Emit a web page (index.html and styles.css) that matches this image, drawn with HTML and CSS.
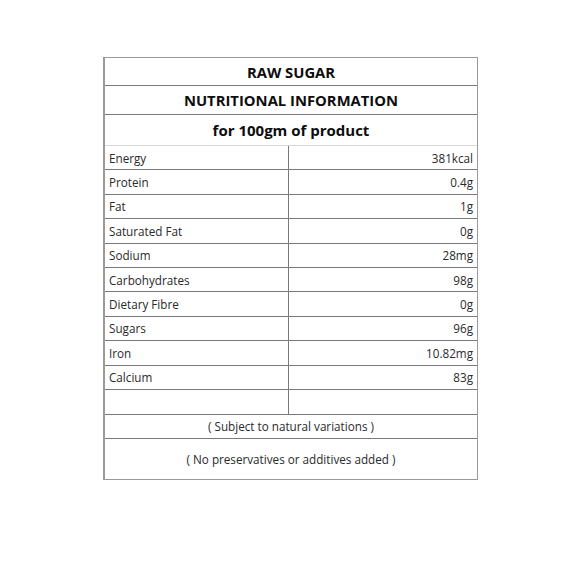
FILE: index.html
```html
<!DOCTYPE html>
<html>
<head>
<meta charset="utf-8">
<link rel="stylesheet" href="styles.css">
</head>
<body>
<div class="panel">
  <div class="head h1">RAW SUGAR</div>
  <div class="head h2">NUTRITIONAL INFORMATION</div>
  <div class="head h3">for 100gm of product</div>
  <div class="row"><div class="k">Energy</div><div class="v">381kcal</div></div>
  <div class="row"><div class="k">Protein</div><div class="v">0.4g</div></div>
  <div class="row"><div class="k">Fat</div><div class="v">1g</div></div>
  <div class="row"><div class="k">Saturated Fat</div><div class="v">0g</div></div>
  <div class="row"><div class="k">Sodium</div><div class="v">28mg</div></div>
  <div class="row"><div class="k">Carbohydrates</div><div class="v">98g</div></div>
  <div class="row"><div class="k">Dietary Fibre</div><div class="v">0g</div></div>
  <div class="row"><div class="k">Sugars</div><div class="v">96g</div></div>
  <div class="row"><div class="k">Iron</div><div class="v">10.82mg</div></div>
  <div class="row"><div class="k">Calcium</div><div class="v">83g</div></div>
  <div class="row empty"><div class="k"></div><div class="v"></div></div>
  <div class="note n1">( Subject to natural variations )</div>
  <div class="note n2">( No preservatives or additives added )</div>
</div>
</body>
</html>
```
FILE: styles.css
```css
html, body {
  margin: 0;
  padding: 0;
  background: #ffffff;
}
body {
  font-family: "Open Sans", "Noto Sans", sans-serif;
  color: #111111;
}
.panel {
  margin: 57px 0 0 103px;
  width: 375px;
  box-sizing: border-box;
  border: 1px solid #9a9a9a;
  border-left-width: 2px;
  border-top-width: 1.5px;
}
.head {
  display: flex;
  align-items: center;
  justify-content: center;
  box-sizing: border-box;
  border-bottom: 1px solid #7a7a7a;
  font-weight: 700;
  font-size: 14.8px;
  color: #0d0d0d;
}
.h1 { height: 28px; }
.h2 { height: 29px; }
.h3 { height: 31px; font-size: 15px; border-bottom-color: #d8d8d8; }
.row {
  display: grid;
  grid-template-columns: 184px 1fr;
  height: 24.4px;
  box-sizing: border-box;
  border-bottom: 1px solid #7a7a7a;
  font-size: 11.7px;
  color: #2a2a2a;
}
.row.empty { height: 25px; }
.k {
  display: flex;
  align-items: center;
  padding-left: 4px;
  border-right: 1px solid #7a7a7a;
}
.v {
  display: flex;
  align-items: center;
  justify-content: flex-end;
  padding-right: 4px;
}
.note {
  display: flex;
  align-items: center;
  justify-content: center;
  box-sizing: border-box;
  font-size: 11.7px;
  color: #2a2a2a;
}
.n1 { height: 24px; border-bottom: 1px solid #7a7a7a; }
.n2 { height: 40px; }
```
